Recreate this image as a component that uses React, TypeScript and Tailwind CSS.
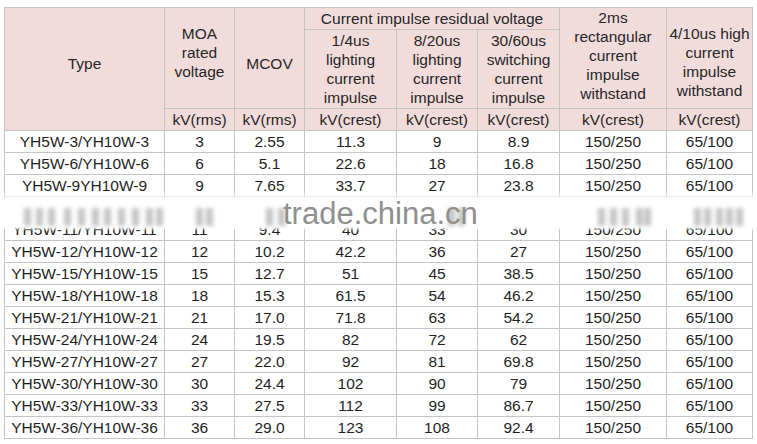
import React from 'react';

type Row = [string, string, string, string, string, string];

const rows: Row[] = [
  ['YH5W-3/YH10W-3', '3', '2.55', '11.3', '9', '8.9'],
  ['YH5W-6/YH10W-6', '6', '5.1', '22.6', '18', '16.8'],
  ['YH5W-9YH10W-9', '9', '7.65', '33.7', '27', '23.8'],
  ['', '', '', '', '', ''],
  ['YH5W-11/YH10W-11', '11', '9.4', '40', '33', '30'],
  ['YH5W-12/YH10W-12', '12', '10.2', '42.2', '36', '27'],
  ['YH5W-15/YH10W-15', '15', '12.7', '51', '45', '38.5'],
  ['YH5W-18/YH10W-18', '18', '15.3', '61.5', '54', '46.2'],
  ['YH5W-21/YH10W-21', '21', '17.0', '71.8', '63', '54.2'],
  ['YH5W-24/YH10W-24', '24', '19.5', '82', '72', '62'],
  ['YH5W-27/YH10W-27', '27', '22.0', '92', '81', '69.8'],
  ['YH5W-30/YH10W-30', '30', '24.4', '102', '90', '79'],
  ['YH5W-33/YH10W-33', '33', '27.5', '112', '99', '86.7'],
  ['YH5W-36/YH10W-36', '36', '29.0', '123', '108', '92.4'],
];

const widths = [160, 70, 70, 92, 81, 82, 107, 86];

// blurry streaks left by the band over the 11 row
const smudges = [
  20, 32, 44, 60, 74, 88, 100, 114, 128, 142, 152,
  192, 202,
  262, 274,
  444, 454,
  594, 606, 618, 632, 640,
  690, 700, 712, 722, 732,
];

function App() {
  const th = 'border border-[#c4c4c4] bg-[#f2dcdb] p-0 text-center font-normal text-[#262626] leading-[19px]';
  const td = 'border border-[#c4c4c4] p-0 h-[22px] text-center text-[#1f1f1f] leading-[20px]';

  return (
    <div className="w-[757px] h-[444px] bg-white overflow-hidden" style={{ fontFamily: '"Liberation Sans", Arial, sans-serif' }}>
      <div className="relative ml-[4px] mt-[7px] w-[749px]">
        <table className="table-fixed border-collapse text-[15.5px] w-[749px]">
          <colgroup>
            {widths.map((w, i) => (
              <col key={i} style={{ width: w }} />
            ))}
          </colgroup>
          <thead>
            <tr className="h-[22px]">
              <th rowSpan={3} className={`${th} pb-[12px]`}>Type</th>
              <th rowSpan={2} className={`${th} pb-[12px]`}>MOA<br />rated<br />voltage</th>
              <th rowSpan={2} className={`${th} pt-[10px]`}>MCOV</th>
              <th colSpan={3} className={th}>Current impulse residual voltage</th>
              <th rowSpan={2} className={`${th} pb-[5px]`}>2ms<br />rectangular<br />current<br />impulse<br />withstand</th>
              <th rowSpan={2} className={`${th} pt-[8px]`}>4/10us high<br />current<br />impulse<br />withstand</th>
            </tr>
            <tr className="h-[79px]">
              <th className={th}>1/4us<br />lighting<br />current<br />impulse</th>
              <th className={th}>8/20us<br />lighting<br />current<br />impulse</th>
              <th className={th}>30/60us<br />switching<br />current<br />impulse</th>
            </tr>
            <tr className="h-[22px]">
              <th className={th}>kV(rms)</th>
              <th className={th}>kV(rms)</th>
              <th className={th}>kV(crest)</th>
              <th className={th}>kV(crest)</th>
              <th className={th}>kV(crest)</th>
              <th className={th}>kV(crest)</th>
              <th className={th}>kV(crest)</th>
            </tr>
          </thead>
          <tbody>
            {rows.map((r, i) => {
              const blank = r[0] === '';
              return (
                <tr key={i} className="h-[22px]">
                  {r.map((c, j) => (
                    <td key={j} className={td}>{c}</td>
                  ))}
                  <td className={td}>{blank ? '' : '150/250'}</td>
                  <td className={td}>{blank ? '' : '65/100'}</td>
                </tr>
              );
            })}
          </tbody>
        </table>

        {/* blurred band with watermark */}
        <div className="absolute left-0 top-[184px] h-[40px] w-[752px] bg-[linear-gradient(to_bottom,rgba(255,255,255,0)_0%,#fff_22%,#fff_90%,rgba(255,255,255,0)_100%)]">
          {smudges.map((x, i) => (
            <div
              key={i}
              className="absolute top-[17px] h-[18px] w-[7px] bg-[#9c9c9c] opacity-60 blur-[2px]"
              style={{ left: x }}
            />
          ))}
          <div className="absolute left-[279px] top-[5px] text-[31px] leading-[36px] text-[#8f8f8f]">
            trade.china.cn
          </div>
        </div>
      </div>
    </div>
  );
}

export default App;
